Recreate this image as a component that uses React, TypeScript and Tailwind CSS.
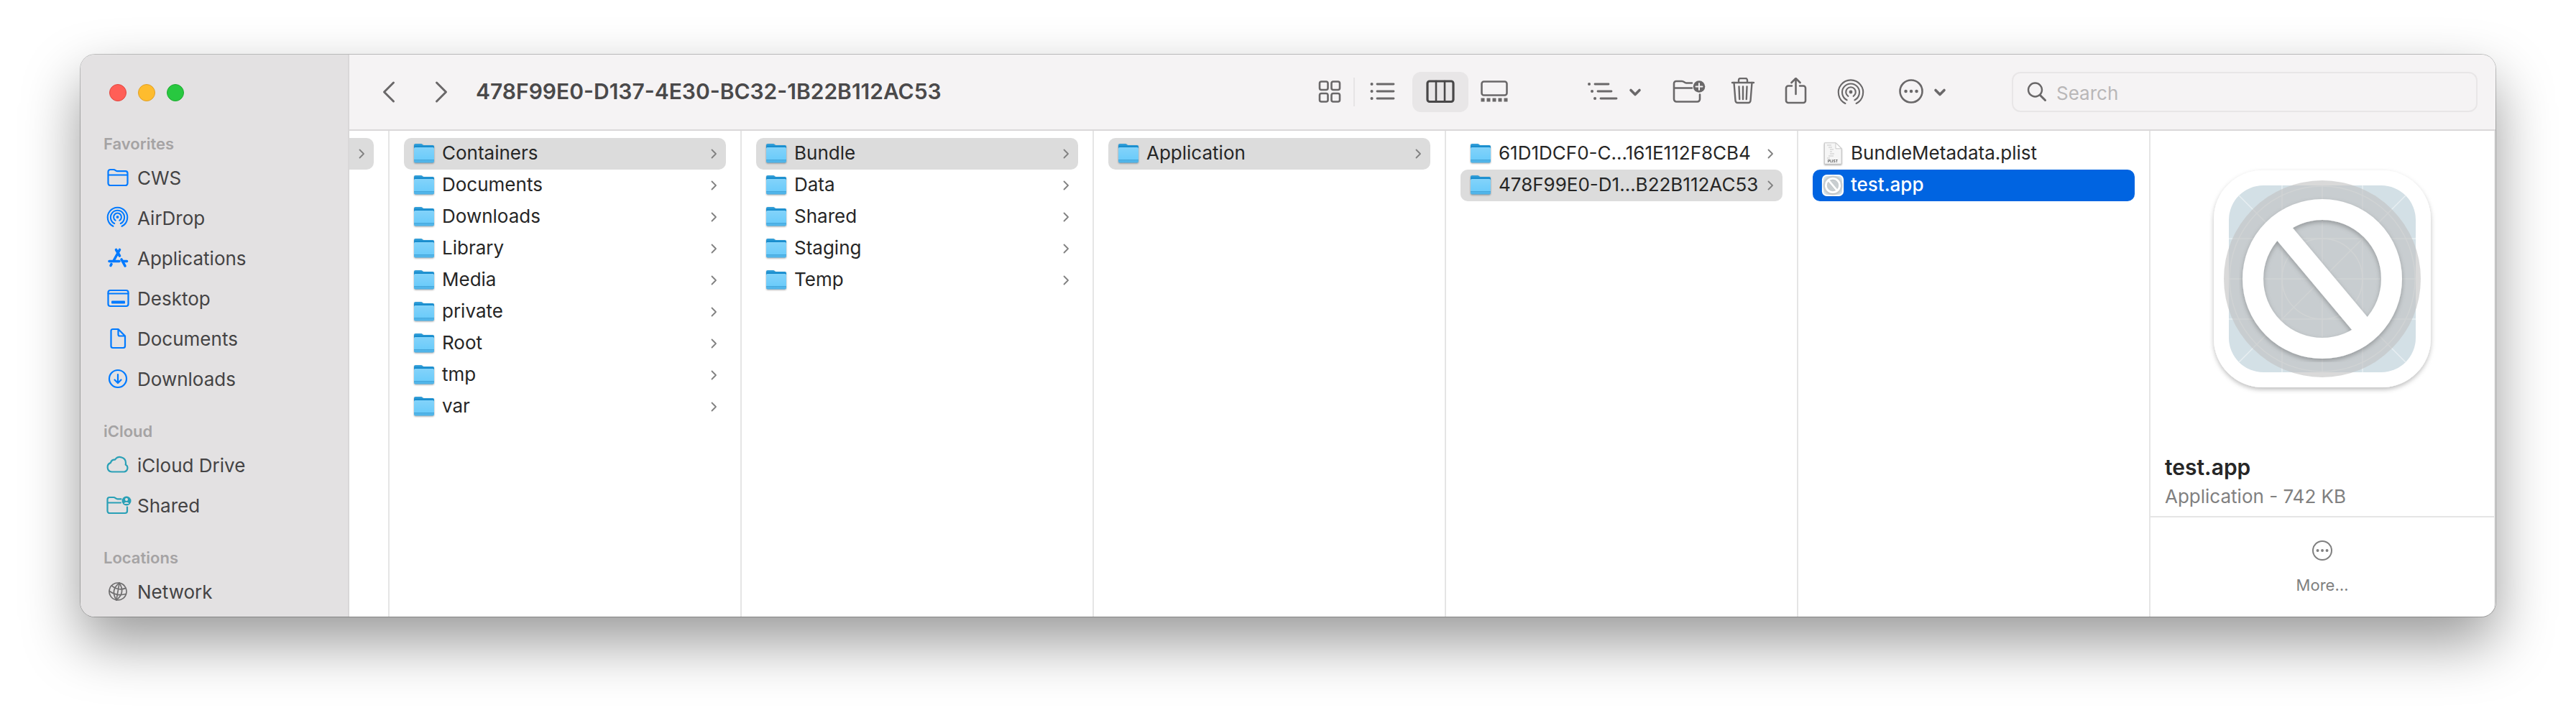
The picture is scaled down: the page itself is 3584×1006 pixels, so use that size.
import { useId, type ReactNode } from "react";

type Entry = { name: string; kind?: "folder" | "plist" | "app"; active?: "gray" | "blue" };

const columns: { label: string; entries: Entry[] }[] = [
  {
    label: "data",
    entries: [
      { name: "Containers", active: "gray" },
      { name: "Documents" },
      { name: "Downloads" },
      { name: "Library" },
      { name: "Media" },
      { name: "private" },
      { name: "Root" },
      { name: "tmp" },
      { name: "var" },
    ],
  },
  {
    label: "Containers",
    entries: [
      { name: "Bundle", active: "gray" },
      { name: "Data" },
      { name: "Shared" },
      { name: "Staging" },
      { name: "Temp" },
    ],
  },
  { label: "Bundle", entries: [{ name: "Application", active: "gray" }] },
  {
    label: "Application",
    entries: [{ name: "61D1DCF0-C…161E112F8CB4" }, { name: "478F99E0-D1…B22B112AC53", active: "gray" }],
  },
  {
    label: "478F99E0-D137-4E30-BC32-1B22B112AC53",
    entries: [
      { name: "BundleMetadata.plist", kind: "plist" },
      { name: "test.app", kind: "app", active: "blue" },
    ],
  },
];

function Glyph({ children, className = "size-10", box = "0 0 40 40", width = 2.6 }: { children: ReactNode; className?: string; box?: string; width?: number }) {
  return (
    <svg
      viewBox={box}
      className={`shrink-0 ${className}`}
      fill="none"
      stroke="currentColor"
      strokeWidth={width}
      strokeLinecap="round"
      strokeLinejoin="round"
      aria-hidden="true"
    >
      {children}
    </svg>
  );
}

function AirDropRings() {
  return (
    <>
      <circle cx="20" cy="20" r="2.4" fill="currentColor" stroke="none" />
      <path d="M16.4 25.8A6.8 6.8 0 1 1 23.6 25.8" />
      <path d="M14.6 31.2A12 12 0 1 1 25.4 31.2" />
      <path d="M12.4 36A17.2 17.2 0 1 1 27.6 36" />
    </>
  );
}

function FolderIcon() {
  const id = useId();
  return (
    <svg viewBox="0 0 32 32" className="size-8 shrink-0 drop-shadow-[0_1px_1px_rgba(0,0,0,0.35)]" aria-hidden="true">
      <defs>
        <linearGradient id={`${id}b`} x1="0" y1="0" x2="0" y2="1">
          <stop offset="0" stopColor="#3ba4dc" />
          <stop offset="0.3" stopColor="#0d85c8" />
        </linearGradient>
        <linearGradient id={`${id}f`} x1="0" y1="0" x2="0" y2="1">
          <stop offset="0" stopColor="#83d3fa" />
          <stop offset="0.8" stopColor="#6bcbfa" />
          <stop offset="0.84" stopColor="#52b6ea" />
          <stop offset="1" stopColor="#4fb3e8" />
        </linearGradient>
      </defs>
      <path d="M2 4a2 2 0 0 1 2-2h7.500c1 0 1.600.3 2.300 1l.6.5c.6.5 1 .6 1.800.6H28a2 2 0 0 1 2 2V20H2z" fill={`url(#${id}b)`} />
      <path d="M2 8.500a1.500 1.500 0 0 1 1.500-1.500h25a1.500 1.500 0 0 1 1.500 1.500V26.500a2 2 0 0 1-2 2H4a2 2 0 0 1-2-2z" fill={`url(#${id}f)`} />
      <path d="M2 24.500h28" stroke="#3d9fd4" strokeWidth="0.8" />
    </svg>
  );
}

function PlistIcon() {
  return (
    <svg viewBox="0 0 32 32" className="size-8 shrink-0 drop-shadow-[0_1px_1px_rgba(0,0,0,0.4)]" aria-hidden="true">
      <path d="M4.500.800h15.500l8 8V30.200H4.500z" fill="#f6f6f6" stroke="#c4c4c4" strokeWidth="0.8" />
      <path d="M20 .800v8h8z" fill="#fff" stroke="#bdbdbd" strokeWidth="0.8" />
      <path d="M8 4h6M10 7h5M12 10h5M12 13h3M12 16h6M10 19h7M8 22h4" stroke="#c9c9c9" strokeWidth="1" />
      <text x="16" y="28" textAnchor="middle" className="fill-[#444444] font-['Inter'] text-[5px] font-semibold">
        PLIST
      </text>
    </svg>
  );
}

function AppIcon({ className }: { className: string }) {
  const id = useId();
  return (
    <svg viewBox="0 0 320 320" className={`shrink-0 ${className}`} fill="none" aria-hidden="true">
      <defs>
        <clipPath id={id}>
          <rect x="30" y="30" width="260" height="260" rx="48" />
        </clipPath>
        <filter id={`${id}s`} x="-10%" y="-10%" width="120%" height="120%">
          <feDropShadow dx="0" dy="3" stdDeviation="3" floodColor="#000" floodOpacity="0.26" />
        </filter>
      </defs>
      <rect x="9" y="9" width="302" height="302" rx="68" fill="#fff" filter={`url(#${id}s)`} />
      <g clipPath={`url(#${id})`}>
        <rect x="30" y="30" width="260" height="260" fill="#d3e0e6" />
        <g stroke="#e8eff2" strokeWidth="1.400">
          <path d="M104 30V290M160 30V290M216 30V290M30 104H290M30 160H290M30 216H290M30 30L290 290M290 30L30 290" />
          <circle cx="160" cy="160" r="56" />
          <circle cx="160" cy="160" r="129" />
        </g>
      </g>
      <circle cx="160" cy="160" r="137" fill="#c1c1c1" fillOpacity="0.62" />
      <g stroke="#fff" filter={`url(#${id}s)`}>
        <circle cx="160" cy="160" r="96.500" strokeWidth="29" />
        <path d="M98 86L222 234" strokeWidth="28" />
      </g>
    </svg>
  );
}

function RowChevron() {
  return (
    <svg viewBox="0 0 10 16" className="h-4 w-2.5 shrink-0 text-[#818181]" fill="none" stroke="currentColor" strokeWidth="1.800" strokeLinecap="round" strokeLinejoin="round" aria-hidden="true">
      <path d="M2.500 2.500L8 8L2.500 13.500" />
    </svg>
  );
}

function MenuChevron() {
  return (
    <Glyph className="h-5 w-5" box="0 0 20 20" width={3.600}>
      <path d="M4 7.500L10 13.500L16 7.500" />
    </Glyph>
  );
}

function EntryRow({ entry }: { entry: Entry }) {
  const kind = entry.kind ?? "folder";
  const tone =
    entry.active === "blue" ? "bg-[#0064e1] text-white font-medium" : entry.active === "gray" ? "bg-[#dcdcdc] text-[#262626]" : "text-[#262626]";
  return (
    <li>
      <button type="button" className={`flex h-11 w-full items-center rounded-[10px] pr-3 pl-3 text-left ${tone}`}>
        {kind === "folder" && <FolderIcon />}
        {kind === "plist" && <PlistIcon />}
        {kind === "app" && <AppIcon className="size-8" />}
        <span className="ml-[9px] flex-1 pb-0.5 text-[26px] leading-8 whitespace-nowrap">{entry.name}</span>
        {kind === "folder" && <RowChevron />}
      </button>
    </li>
  );
}

function SidebarSection({ title, children }: { title: string; children: ReactNode }) {
  return (
    <section className="mb-[26px] last:mb-0">
      <h2 className="flex h-[38px] items-center text-[22px] font-semibold text-[#a5a3a4]">{title}</h2>
      <ul>{children}</ul>
    </section>
  );
}

function SidebarItem({ label, tone = "text-[#007aff]", children }: { label: string; tone?: string; children: ReactNode }) {
  return (
    <li>
      <a href="#" className="flex h-14 items-center gap-[7px] text-[26px] text-[#444344]">
        <span className={tone}>
          <Glyph>{children}</Glyph>
        </span>
        {label}
      </a>
    </li>
  );
}

function Sidebar() {
  return (
    <aside className="w-[374px] shrink-0 border-r-2 border-[#d9d7d8] bg-[#e3e1e2] pb-[7px] pl-8">
      <div className="flex h-[105px] items-center gap-4 pl-2">
        <button type="button" aria-label="Close" className="size-6 rounded-full border border-[#e2463f] bg-[#ff5f57]" />
        <button type="button" aria-label="Minimize" className="size-6 rounded-full border border-[#e0a028] bg-[#febc2e]" />
        <button type="button" aria-label="Zoom" className="size-6 rounded-full border border-[#1faa30] bg-[#28c840]" />
      </div>
      <nav aria-label="Sidebar">
        <SidebarSection title="Favorites">
          <SidebarItem label="CWS">
            <path d="M6.500 28V12a3 3 0 0 1 3-3h4.500c2.500 0 3 2.200 5.500 2.200h11a3 3 0 0 1 3 3V28a3 3 0 0 1-3 3h-21a3 3 0 0 1-3-3zM6.500 16.500h27" strokeWidth="2.200" />
          </SidebarItem>
          <SidebarItem label="AirDrop">
            <g transform="translate(3.500 3) scale(0.800)">
              <AirDropRings />
            </g>
          </SidebarItem>
          <SidebarItem label="Applications">
            <path d="M17.500 8.500L22.500 17M22.500 8.500L14.500 23M25 22L30 31M11 28.500L10 30.500" strokeWidth="3.600" />
            <path d="M8 24.500h14M27 24.500h5.500" strokeWidth="3.600" />
          </SidebarItem>
          <SidebarItem label="Desktop">
            <rect x="6.500" y="9" width="28" height="22" rx="3" strokeWidth="2.200" />
            <path d="M6.500 13.500h28" strokeWidth="2" />
            <rect x="11" y="23.500" width="19" height="4" rx="1" fill="currentColor" stroke="none" />
          </SidebarItem>
          <SidebarItem label="Documents">
            <path d="M10.500 9.500a2.500 2.500 0 0 1 2.500-2.500h7.500L30 16.500V30.500a2.500 2.500 0 0 1-2.500 2.500h-14.500a2.500 2.500 0 0 1-2.500-2.500zM20.500 7v7.500a2 2 0 0 0 2 2H30" strokeWidth="2.200" />
          </SidebarItem>
          <SidebarItem label="Downloads">
            <circle cx="20" cy="20" r="12" strokeWidth="2.200" />
            <path d="M20 14V25.500M15.500 21.500L20 26L24.500 21.500" strokeWidth="2.200" />
          </SidebarItem>
        </SidebarSection>
        <SidebarSection title="iCloud">
          <SidebarItem label="iCloud Drive" tone="text-[#2aa0b6]">
            <path d="M11.500 29.500a6.500 6.500 0 0 1-1.500-12.600 5 5 0 0 1 6-4.200 8.200 8.200 0 0 1 15 4.800c0 .8 0 1.300-.3 2a5.400 5.400 0 0 1-1.700 10z" strokeWidth="2.200" />
          </SidebarItem>
          <SidebarItem label="Shared" tone="text-[#2aa0b6]">
            <path d="M24.500 11.300h-5C17 11.300 16.500 9 14 9H8.500A3 3 0 0 0 5.500 12V28a3 3 0 0 0 3 3h21.500a3 3 0 0 0 3-3V22.500M5.500 16.500h18.500" strokeWidth="2.200" />
            <circle cx="32" cy="14" r="6.500" fill="currentColor" stroke="none" />
            <circle cx="32" cy="12" r="2" fill="#e3e1e2" stroke="none" />
            <path d="M28.500 18a3.600 3 0 0 1 7 0z" fill="#e3e1e2" stroke="none" />
          </SidebarItem>
        </SidebarSection>
        <SidebarSection title="Locations">
          <SidebarItem label="Network" tone="text-[#6f6e6f]">
            <g strokeWidth="1.700" transform="rotate(10 20 20)">
              <circle cx="20" cy="20" r="12" />
              <path d="M20 8Q9 20 20 32M20 8Q31 20 20 32" />
              <path d="M20 8V32M10 13.500Q20 19.500 30 13.500M8.300 21.500Q20 27 31.700 21.500" />
            </g>
          </SidebarItem>
        </SidebarSection>
      </nav>
    </aside>
  );
}

function ToolButton({ label, className, children }: { label: string; className: string; children: ReactNode }) {
  return (
    <button type="button" aria-label={label} className={`flex h-14 shrink-0 items-center justify-center ${className}`}>
      {children}
    </button>
  );
}

function Toolbar() {
  return (
    <header className="flex h-[106px] items-center border-b-2 border-[#dad8d9] bg-[#f5f3f4] pr-[25px] pl-[35px] text-[#6a6869]">
      <ToolButton label="Back" className="w-10">
        <Glyph width={3}>
          <path d="M26.500 7L13.500 20L26.500 33" />
        </Glyph>
      </ToolButton>
      <ToolButton label="Forward" className="ml-8 w-10">
        <Glyph width={3}>
          <path d="M14.500 7L27.500 20L14.500 33" />
        </Glyph>
      </ToolButton>
      <h1 className="ml-[29px] flex-1 pb-0.5 text-[30px] font-semibold whitespace-nowrap text-[#4a494a]">478F99E0-D137-4E30-BC32-1B22B112AC53</h1>

      <ToolButton label="Icon view" className="w-[67px]">
        <Glyph>
          <rect x="6" y="5.500" width="11.500" height="11.500" rx="2.500" />
          <rect x="22.500" y="5.500" width="11.500" height="11.500" rx="2.500" />
          <rect x="6" y="22" width="11.500" height="11.500" rx="2.500" />
          <rect x="22.500" y="22" width="11.500" height="11.500" rx="2.500" />
        </Glyph>
      </ToolButton>
      <span className="h-10 w-0.5 shrink-0 bg-[#e6e4e5]" />
      <ToolButton label="List view" className="w-20">
        <Glyph width={2.800}>
          <path d="M11 9H34M11 19H34M11 29H34" />
          <path d="M3.500 9h.1M3.500 19h.1M3.500 29h.1" strokeWidth="4" />
        </Glyph>
      </ToolButton>
      <ToolButton label="Column view" className="w-[78px] rounded-xl bg-[#e8e6e7] text-[#484748]">
        <Glyph>
          <rect x="2" y="5" width="36" height="28.500" rx="3" strokeWidth="3.200" />
          <path d="M14 5V33M26 5V33" />
        </Glyph>
      </ToolButton>
      <ToolButton label="Gallery view" className="w-[74px]">
        <Glyph>
          <rect x="1.500" y="5.500" width="35" height="19" rx="3" />
          <path d="M.500 31H37.500" strokeWidth="5" strokeLinecap="butt" strokeDasharray="5 3" />
        </Glyph>
      </ToolButton>

      <ToolButton label="Group items" className="ml-[89px] gap-[11px]">
        <Glyph className="h-10 w-12" box="0 0 48 40" width={2.800}>
          <path d="M13 9H32M17 19H36M21 29H43" />
          <path d="M5 9h.1M9 19h.1M13 29h.1" strokeWidth="4" />
        </Glyph>
        <MenuChevron />
      </ToolButton>
      <ToolButton label="New folder" className="ml-[27px] w-[75px]">
        <Glyph className="h-10 w-12" box="0 0 48 40">
          <path d="M28 7.500h-8C17.500 7.500 17 5 14 5H6.500A3 3 0 0 0 3 8V30a3.500 3.500 0 0 0 3.500 3.500h29A3.500 3.500 0 0 0 39 30V23.500M3 14.500h25" />
          <circle cx="38" cy="12.500" r="8.300" fill="currentColor" stroke="none" />
          <path d="M38 8v9M33.500 12.500h9" stroke="#f5f3f4" strokeWidth="2" />
        </Glyph>
      </ToolButton>
      <ToolButton label="Move to Trash" className="w-[75px]">
        <Glyph width={2.400}>
          <path d="M5 7H35M14 7V3.500a2.500 2.500 0 0 1 2.500-2.500h7a2.500 2.500 0 0 1 2.500 2.500V7" />
          <path d="M7.500 7L9.500 32a3 3 0 0 0 3 3h15a3 3 0 0 0 3-3L32.500 7M14.500 12.500L15.200 30M20 12.500V30M25.500 12.500L24.800 30" />
        </Glyph>
      </ToolButton>
      <ToolButton label="Share" className="w-[75px]">
        <Glyph>
          <path d="M13 11.500H8A3 3 0 0 0 5 14.500V32a3 3 0 0 0 3 3H29a3 3 0 0 0 3-3V14.500a3 3 0 0 0-3-3H24" />
          <path d="M18.500 23V1.500M12.500 7L18.500 1L24.500 7" />
        </Glyph>
      </ToolButton>
      <ToolButton label="AirDrop" className="w-[75px]">
        <Glyph width={2.100}>
          <AirDropRings />
        </Glyph>
      </ToolButton>
      <ToolButton label="More actions" className="ml-[27px] gap-[10px]">
        <Glyph>
          <circle cx="20" cy="19" r="15.500" />
          <path d="M12.500 19h.1M20 19h.1M27.500 19h.1" strokeWidth="4.400" />
        </Glyph>
        <MenuChevron />
      </ToolButton>

      <div className="ml-[90px] flex h-14 w-[648px] items-center rounded-xl border-2 border-[#e8e6e7] pl-[18px]">
        <Glyph className="size-8" box="0 0 32 32" width={2.400}>
          <circle cx="12.500" cy="13" r="9.500" />
          <path d="M19.500 20.500L26.500 27.500" strokeWidth="3" />
        </Glyph>
        <input
          type="search"
          aria-label="Search"
          placeholder="Search"
          className="ml-[10px] min-w-0 flex-1 bg-transparent pt-1 text-[26px] leading-8 outline-none placeholder:text-[#b9b7b8]"
        />
      </div>
    </header>
  );
}

function Preview() {
  return (
    <section aria-label="Preview" className="flex min-w-0 flex-1 flex-col border-r-2 border-[#e5e5e5] pt-[46px]">
      <AppIcon className="size-80 self-center" />
      <h2 className="mt-[84px] pl-5 text-[30px] leading-9 font-semibold text-[#262626]">test.app</h2>
      <p className="mt-[7px] mb-[11px] pl-5 text-[26px] leading-8 text-[#808080]">Application - 742 KB</p>
      <div className="flex flex-1 justify-center border-t-2 border-[#e5e5e5] pt-[30px]">
        <button type="button" className="flex flex-col items-center self-start text-[22px] leading-7 text-[#808080]">
          <Glyph className="size-8" box="0 0 32 32" width={2}>
            <circle cx="16" cy="16" r="13" />
            <path d="M9.500 16h.1M16 16h.1M22.500 16h.1" strokeWidth="3.800" />
          </Glyph>
          <span className="mt-[18px]">More…</span>
        </button>
      </div>
    </section>
  );
}

export default function App() {
  return (
    <main className="min-h-screen bg-white px-28 pt-[76px] pb-[148px] font-['Inter','Liberation_Sans',sans-serif]">
      <div className="flex overflow-hidden rounded-[20px] bg-white shadow-[0_0_0_1px_rgba(0,0,0,0.22),0_36px_80px_rgba(0,0,0,0.4)]">
        <Sidebar />
        <div className="flex min-w-0 flex-1 flex-col">
          <Toolbar />
          <div className="flex flex-1">
            <div className="w-14 shrink-0 border-r-2 border-[#e5e5e5] pt-2.5">
              <button type="button" aria-label="Parent folder" className="flex h-11 w-[34px] items-center justify-end rounded-r-[10px] bg-[#dcdcdc] pr-3">
                <RowChevron />
              </button>
            </div>
            {columns.map((column) => (
              <ul key={column.label} aria-label={column.label} className="w-[490px] shrink-0 border-r-2 border-[#e5e5e5] px-5 pt-2.5">
                {column.entries.map((entry) => (
                  <EntryRow key={entry.name} entry={entry} />
                ))}
              </ul>
            ))}
            <Preview />
          </div>
        </div>
      </div>
    </main>
  );
}
